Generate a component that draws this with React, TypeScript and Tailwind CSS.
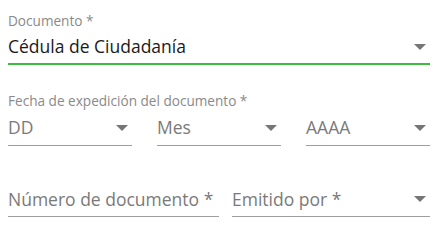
import React from "react";

const Arrow = () => (
  <svg width="12" height="6" viewBox="0 0 12 6" className="shrink-0">
    <path d="M0 0h12L6 6z" fill="#767676" />
  </svg>
);

function Select({ value, className, textClass }: { value: string; className: string; textClass: string }) {
  return (
    <div className={`flex items-center justify-between pr-[4px] ${className}`}>
      <span className={textClass}>{value}</span>
      <Arrow />
    </div>
  );
}

export default function App() {
  return (
    <div
      className="w-[438px] h-[229px] bg-white pl-[8px] pr-[8px]"
      style={{ fontFamily: '"Open Sans", sans-serif' }}
    >
      <div className="pt-[12px]">
        <div className="text-[13.6px] leading-[18px] text-[#8a8a8a]">Documento *</div>
        <Select
          value="Cédula de Ciudadanía"
          className="border-b-2 border-[#3dbb3d] h-[35px]"
          textClass="text-[17.5px] text-[#1a1a1a]"
        />
      </div>
      <div className="pt-[27px]">
        <div className="text-[13.6px] leading-[18px] text-[#8a8a8a]">Fecha de expedición del documento *</div>
        <div className="flex gap-[25px]">
          <Select value="DD" className="w-[124px] border-b border-[#9e9e9e] h-[36px]" textClass="text-[17.5px] text-[#7a7a7a]" />
          <Select value="Mes" className="w-[124px] border-b border-[#9e9e9e] h-[36px]" textClass="text-[17.5px] text-[#7a7a7a]" />
          <Select value="AAAA" className="w-[124px] border-b border-[#9e9e9e] h-[36px]" textClass="text-[17.5px] text-[#7a7a7a]" />
        </div>
      </div>
      <div className="pt-[36px] flex gap-[13px]">
        <div className="w-[211px] h-[35px] flex items-center border-b border-[#9e9e9e]">
          <span className="text-[17.5px] text-[#7a7a7a]">Número de documento *</span>
        </div>
        <Select value="Emitido por *" className="w-[198px] border-b border-[#9e9e9e] h-[35px]" textClass="text-[17.5px] text-[#7a7a7a]" />
      </div>
    </div>
  );
}
